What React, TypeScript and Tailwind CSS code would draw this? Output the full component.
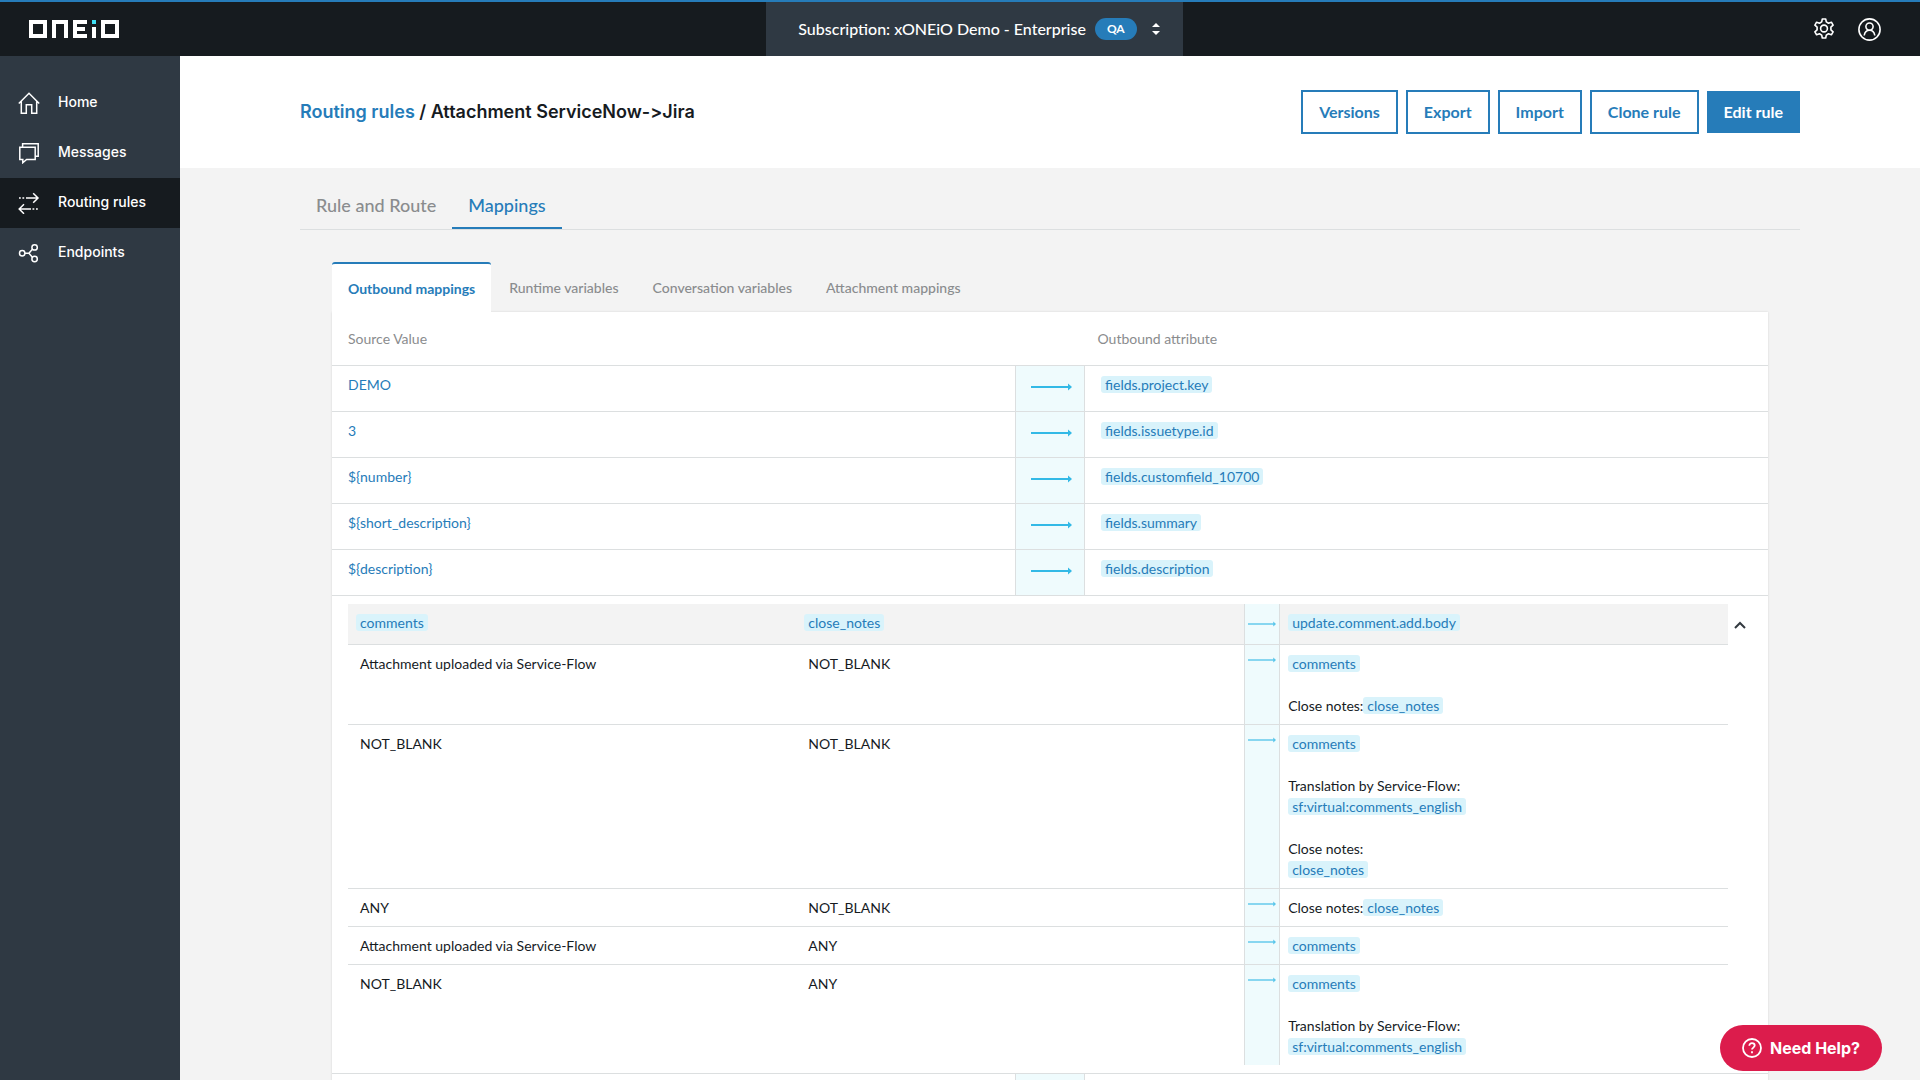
import { useState } from "react";
import type { ReactNode } from "react";

interface Mapping {
  source: string;
  target: string;
}

interface Condition {
  comments: string;
  closeNotes: string;
  body: ReactNode;
}

const NAV = ["Home", "Messages", "Routing rules", "Endpoints"] as const;
type NavItem = (typeof NAV)[number];

const ACTIONS = ["Versions", "Export", "Import", "Clone rule"];

const MAPPING_TABS = [
  "Outbound mappings",
  "Runtime variables",
  "Conversation variables",
  "Attachment mappings",
];

const MAPPINGS: Mapping[] = [
  { source: "DEMO", target: "fields.project.key" },
  { source: "3", target: "fields.issuetype.id" },
  { source: "${number}", target: "fields.customfield_10700" },
  { source: "${short_description}", target: "fields.summary" },
  { source: "${description}", target: "fields.description" },
];

function Tag({ children }: { children: ReactNode }) {
  return (
    <span className="rounded-[3px] bg-[#d9f3fb] px-1 text-[#267cb9]">
      {children}
    </span>
  );
}

const CONDITIONS: Condition[] = [
  {
    comments: "Attachment uploaded via Service-Flow",
    closeNotes: "NOT_BLANK",
    body: (
      <>
        <Tag>comments</Tag>
        <br />
        <br />
        Close notes:<Tag>close_notes</Tag>
      </>
    ),
  },
  {
    comments: "NOT_BLANK",
    closeNotes: "NOT_BLANK",
    body: (
      <>
        <Tag>comments</Tag>
        <br />
        <br />
        Translation by Service-Flow:
        <br />
        <Tag>sf:virtual:comments_english</Tag>
        <br />
        <br />
        Close notes:
        <br />
        <Tag>close_notes</Tag>
      </>
    ),
  },
  {
    comments: "ANY",
    closeNotes: "NOT_BLANK",
    body: (
      <>
        Close notes:<Tag>close_notes</Tag>
      </>
    ),
  },
  {
    comments: "Attachment uploaded via Service-Flow",
    closeNotes: "ANY",
    body: <Tag>comments</Tag>,
  },
  {
    comments: "NOT_BLANK",
    closeNotes: "ANY",
    body: (
      <>
        <Tag>comments</Tag>
        <br />
        <br />
        Translation by Service-Flow:
        <br />
        <Tag>sf:virtual:comments_english</Tag>
      </>
    ),
  },
];

function Arrow({ className }: { className: string }) {
  return (
    <svg viewBox="0 0 41 8" className={`block ${className}`} aria-hidden="true">
      <path d="M0 4h38" stroke="#33b9e6" strokeWidth="2" />
      <path d="M37 .5 41 4l-4 3.5z" fill="#33b9e6" />
    </svg>
  );
}

function Logo() {
  return (
    <svg width="90" height="18" viewBox="0 0 90 18" aria-hidden="true">
      <g fill="none" stroke="#fff" strokeWidth="4">
        <path d="M2 2h14v14H2z" />
        <path d="M25 18V2h12v16" />
        <path d="M58 2H46v14h12M46 9h10" />
        <path d="M74 2h14v14H74z" />
      </g>
      <path d="M63 7h4v11h-4z" fill="#fff" />
      <path d="M63 0h4v4h-4z" fill="#3fe0f5" />
    </svg>
  );
}

function NavIcon({ name }: { name: NavItem }) {
  return (
    <svg
      width="22"
      height="22"
      viewBox="0 0 22 22"
      fill="none"
      stroke="#fff"
      strokeWidth="1.5"
      aria-hidden="true"
    >
      {name === "Home" && (
        <path d="M.8 11.5 11 1.2l10.2 10.3M3.3 9.5v11.7h5v-8.4h5.4v8.4h5V9.5" />
      )}
      {name === "Messages" && (
        <path d="M1.8 5.2h15.4v12.3H8.6l-3.8 3.2v-3.2h-3zM4.6 5.2V1.8h15.6v12.4h-3" />
      )}
      {name === "Routing rules" && (
        <>
          <path d="M8 6h12M15.2 1.2 20 6l-4.8 4.8M13 17H1.5M6 12.2 1.2 17 6 21.8" />
          <path d="M1 6h1.8M4.4 6h1.8M14.5 17h1.8M18 17h1.8" />
        </>
      )}
      {name === "Endpoints" && (
        <>
          <circle cx="4.2" cy="11.2" r="2.7" />
          <circle cx="16.6" cy="5.4" r="2.7" />
          <circle cx="16.6" cy="17" r="2.7" />
          <path d="M6.9 11.2h4M14.4 7.2l-3.5 4 3.5 4" />
        </>
      )}
    </svg>
  );
}

function TopBar() {
  return (
    <header className="flex h-14 items-stretch justify-between border-t-2 border-[#267cb9] bg-[#161b1f]">
      <a href="#" aria-label="ONEiO" className="flex items-center pr-4 pl-[29px]">
        <Logo />
      </a>
      <button className="flex items-center bg-[#2f3943] pr-[23px] pl-8 text-base font-medium text-white">
        Subscription: xONEiO Demo - Enterprise
        <span className="ml-[9px] flex h-[22px] items-center rounded-full bg-[#267cb9] px-3 text-xs font-bold">
          QA
        </span>
        <svg width="8" height="12" viewBox="0 0 8 12" fill="#fff" className="ml-[15px]" aria-hidden="true">
          <path d="M4 0l4 4H0zM4 12l4-4H0z" />
        </svg>
      </button>
      <div className="flex items-center gap-6 pr-[39px]">
        <button aria-label="Settings">
          <svg width="20" height="22" viewBox="0 0 20 22" fill="none" stroke="#fff" strokeWidth="1.6" strokeLinejoin="round">
            <path d="M8.3 1h3.400l.6 2.900 2.200 1.300 2.900-1 1.700 3-2.200 2v2.600l2.200 2-1.700 3-2.900-1-2.200 1.300-.6 2.900H8.300l-.6-2.900-2.200-1.300-2.900 1-1.700-3 2.200-2V9.200l-2.200-2 1.700-3 2.900 1 2.200-1.300z" />
            <circle cx="10" cy="10.5" r="3.4" />
          </svg>
        </button>
        <button aria-label="Account">
          <svg width="23" height="23" viewBox="0 0 23 23" fill="none" stroke="#fff" strokeWidth="1.6">
            <circle cx="11.5" cy="11.5" r="10.6" />
            <circle cx="11.5" cy="8.6" r="3.6" />
            <path d="M6.200 17.500c.5-3.300 2.400-5.300 5.300-5.300s4.800 2 5.300 5.300" />
          </svg>
        </button>
      </div>
    </header>
  );
}

function Sidebar() {
  return (
    <nav className="w-[180px] shrink-0 bg-[#2f3943] pt-[22px] font-['Inter',sans-serif]">
      {NAV.map((item) => (
        <a
          key={item}
          href="#"
          className={`flex h-[50px] items-center gap-[18px] pl-[18px] text-sm font-medium text-white ${
            item === "Routing rules" ? "bg-[#161b1f]" : "hover:bg-[#252d35]"
          }`}
        >
          <NavIcon name={item} />
          <span className="pb-0.5">{item}</span>
        </a>
      ))}
    </nav>
  );
}

function ConditionTable() {
  return (
    <table className="w-full table-fixed leading-[21px]">
      <colgroup>
        <col />
        <col />
        <col className="w-[35px]" />
        <col />
      </colgroup>
      <thead>
        <tr className="h-[41px] border-b border-[#dcdfe0] bg-[#f3f3f3] text-left align-top">
          <th className="px-2 pt-2 font-normal">
            <Tag>comments</Tag>
          </th>
          <th className="px-2 pt-2 font-normal">
            <Tag>close_notes</Tag>
          </th>
          <th className="border-x border-[#dcdfe0] bg-[#effbfd] pt-4">
            <Arrow className="mx-auto h-2 w-7 opacity-80" />
          </th>
          <th className="px-2 pt-2 font-normal">
            <Tag>update.comment.add.body</Tag>
          </th>
        </tr>
      </thead>
      <tbody>
        {CONDITIONS.map((c, i) => (
          <tr key={i} className="border-b border-[#dcdfe0] align-top last:border-b-0">
            <td className="px-3 py-2">{c.comments}</td>
            <td className="px-3 py-2">{c.closeNotes}</td>
            <td className="border-x border-[#dcdfe0] bg-[#effbfd] pt-[11px]">
              <Arrow className="mx-auto h-2 w-7 opacity-80" />
            </td>
            <td className="p-2">{c.body}</td>
          </tr>
        ))}
      </tbody>
    </table>
  );
}

function MappingTable() {
  const [open, setOpen] = useState(true);

  return (
    <table className="w-full table-fixed text-sm leading-[21px]">
      <colgroup>
        <col />
        <col className="w-[69px]" />
        <col />
      </colgroup>
      <thead>
        <tr className="h-[53px] border-b border-[#dcdfe0] text-left text-[#8a8c8e]">
          <th className="px-4 font-normal">Source Value</th>
          <th />
          <th className="px-[13px] font-normal">Outbound attribute</th>
        </tr>
      </thead>
      <tbody>
        {MAPPINGS.map((m) => (
          <tr key={m.target} className="h-[46px] border-b border-[#dcdfe0] align-top text-[#267cb9]">
            <td className="px-4 pt-2">{m.source}</td>
            <td className="border-x border-[#dcdfe0] bg-[#effbfd] pt-[17px]">
              <Arrow className="ml-[15px] h-2 w-[41px]" />
            </td>
            <td className="px-4 pt-2">
              <Tag>{m.target}</Tag>
            </td>
          </tr>
        ))}
        <tr className="border-b border-[#dcdfe0]">
          <td colSpan={3} className="px-4 py-2">
            <div className="flex items-start">
              <div className="min-w-0 flex-1">{open && <ConditionTable />}</div>
              <button
                aria-label="Toggle conditions"
                onClick={() => setOpen(!open)}
                className="flex h-[42px] w-6 items-center justify-center"
              >
                <svg width="12" height="8" viewBox="0 0 12 8" fill="none" stroke="#333a40" strokeWidth="2" className={open ? "" : "rotate-180"}>
                  <path d="M1 7l5-5 5 5" />
                </svg>
              </button>
            </div>
          </td>
        </tr>
        <tr className="h-[46px]">
          <td />
          <td className="border-x border-[#dcdfe0] bg-[#effbfd]" />
          <td />
        </tr>
      </tbody>
    </table>
  );
}

export default function App() {
  const [tab, setTab] = useState(MAPPING_TABS[0]);

  return (
    <div className="flex h-screen flex-col overflow-hidden bg-[#f3f3f3] font-['Lato',sans-serif] text-[#161b1f]">
      <TopBar />
      <div className="flex min-h-0 flex-1">
        <Sidebar />
        <main className="min-w-0 flex-1 overflow-hidden">
          <div className="bg-white px-[120px]">
            <div className="flex h-28 items-center justify-between">
              <h1 className="font-['Inter',sans-serif] text-lg font-semibold [font-variant-ligatures:no-contextual]">
                <a href="#" className="text-[#267cb9]">
                  Routing rules
                </a>{" "}
                / Attachment ServiceNow-&gt;Jira
              </h1>
              <div className="flex items-center gap-2 text-base font-bold">
                {ACTIONS.map((a) => (
                  <button key={a} className="h-11 border-2 border-[#267cb9] px-4 text-[#267cb9]">
                    {a}
                  </button>
                ))}
                <button className="h-[42px] bg-[#267cb9] px-[17px] text-white">Edit rule</button>
              </div>
            </div>
          </div>

          <div className="px-[120px]">
            <div className="flex border-b border-[#dcdfe0] pt-[13px] text-lg font-medium">
              <button className="h-12 border-b-2 border-transparent px-4 pt-0.5 text-[#8a8c8e]">
                Rule and Route
              </button>
              <button className="h-12 border-b-2 border-[#267cb9] px-4 pt-0.5 text-[#267cb9]">
                Mappings
              </button>
            </div>

            <div className="px-8 pt-8">
              {/* Mapping type tabs */}
              <div className="flex gap-0.5 text-sm">
                {MAPPING_TABS.map((t) => (
                  <button
                    key={t}
                    onClick={() => setTab(t)}
                    className={`h-[50px] px-4 pt-0.5 ${
                      t === tab
                        ? "rounded-t-[3px] border-t-2 border-[#267cb9] bg-white font-bold text-[#267cb9]"
                        : "font-medium text-[#8a8c8e]"
                    }`}
                  >
                    {t}
                  </button>
                ))}
              </div>
              <div className="bg-white shadow-[0_0_2px_rgba(0,0,0,0.12)]">
                <MappingTable />
              </div>
            </div>
          </div>
        </main>
      </div>

      <button className="fixed right-[38px] bottom-[9px] flex h-[46px] items-center gap-2 rounded-full bg-[#dc1c4c] px-[22px] font-['Inter',sans-serif] text-base font-bold text-white">
        <svg width="20" height="20" viewBox="0 0 20 20" fill="none" stroke="#fff" strokeWidth="1.8" aria-hidden="true">
          <circle cx="10" cy="10" r="9" />
          <path d="M7.3 7.8c0-1.600 1.200-2.600 2.700-2.600s2.700 1 2.700 2.400c0 1.900-2.700 2.100-2.700 4" />
          <path d="M10 13.300v1.900" />
        </svg>
        Need Help?
      </button>
    </div>
  );
}
